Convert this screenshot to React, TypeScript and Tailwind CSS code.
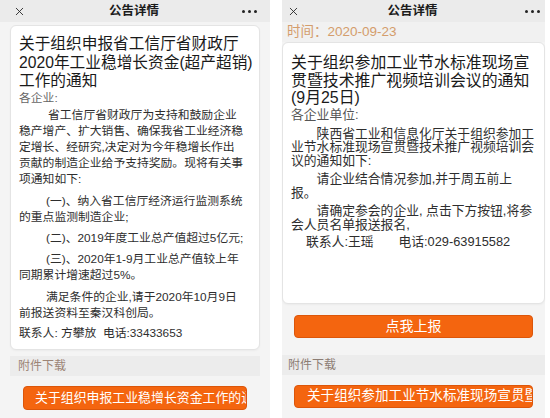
import { X } from 'lucide-react';

// Two notice pages shown side by side, each with its own top bar, body card and buttons.

function Dots() {
  return (
    <div className="flex items-center gap-[3px]">
      <span className="w-[3px] h-[3px] rounded-full bg-[#222]" />
      <span className="w-[3px] h-[3px] rounded-full bg-[#222]" />
      <span className="w-[3px] h-[3px] rounded-full bg-[#222]" />
    </div>
  );
}

function TopBar({ pad }: { pad: string }) {
  return (
    <div className={`h-[22px] shrink-0 bg-[#ebebeb] flex items-center justify-between ${pad}`}>
      <X className="w-[13px] h-[13px] text-[#222]" strokeWidth={1.6} />
      <span className="text-[12.5px] font-semibold text-[#1b1b1b]">公告详情</span>
      <Dots />
    </div>
  );
}

function LeftPage() {
  return (
    <div className="w-[270px] shrink-0 h-full bg-[#f4f4f4] flex flex-col">
      <TopBar pad="px-[13px]" />
      <div className="mx-[10px] mt-[3px] bg-white border border-[#e4e4e4] rounded-[6px] px-[8px] pt-[9px] pb-[8px] shadow-[0_1px_2px_rgba(0,0,0,0.04)]">
        <h1 className="text-[15.7px] leading-[18.5px] text-[#1a1a1a] whitespace-pre">
          {'关于组织申报省工信厅省财政厅\n2020年工业稳增长资金(超产超销)\n工作的通知'}
        </h1>
        <div className="text-[11.8px] leading-[16px] text-[#2e2e2e]">
          <p className="-mt-[1px] text-[#666]">各企业:</p>
          <p className="mt-[1px] indent-[29px] whitespace-pre">
            {'省工信厅省财政厅为支持和鼓励企业\n稳产增产、扩大销售、确保我省工业经济稳\n定增长、经研究,决定对为今年稳增长作出\n贡献的制造企业给予支持奖励。现将有关事\n项通知如下:'}
          </p>
          <p className="mt-[6px] indent-[27px] whitespace-pre">{'(一)、纳入省工信厅经济运行监测系统\n的重点监测制造企业;'}</p>
          <p className="mt-[5px] indent-[27px] whitespace-pre">(二)、2019年度工业总产值超过5亿元;</p>
          <p className="mt-[5px] indent-[27px] whitespace-pre">{'(三)、2020年1-9月工业总产值较上年\n同期累计增速超过5%。'}</p>
          <p className="mt-[6px] indent-[27px] whitespace-pre">{'满足条件的企业,请于2020年10月9日\n前报送资料至秦汉科创局。'}</p>
          <p className="mt-[4px] whitespace-pre">联系人: 方攀放  电话:33433653</p>
        </div>
      </div>
      <div className="mx-[10px] mt-[6px] h-[20px] shrink-0 bg-[#ececec] px-[8px] flex items-center text-[12px] text-[#9c8476]">附件下载</div>
      <div className="mx-[23px] mt-[10px] h-[24px] shrink-0 bg-[#f4650f] border border-[#dc560a] rounded-[4px] pl-[11px] flex items-center overflow-hidden whitespace-nowrap text-[12.9px] text-white">
        关于组织申报工业稳增长资金工作的通知
      </div>
    </div>
  );
}

function RightPage() {
  return (
    <div className="w-[263px] shrink-0 h-full bg-[#f4f4f4] flex flex-col">
      <TopBar pad="px-[5px]" />
      <div className="h-[20px] shrink-0 bg-[#f1f1f1] px-[5px] flex items-center text-[13.5px] text-[#d49d6c]">时间：2020-09-23</div>
      <div className="bg-white border border-[#e4e4e4] rounded-[6px] px-[8px] pt-[11px] pb-[54px] shadow-[0_1px_2px_rgba(0,0,0,0.04)]">
        <h1 className="text-[15.9px] leading-[17.5px] text-[#1a1a1a] whitespace-pre">
          {'关于组织参加工业节水标准现场宣\n贯暨技术推广视频培训会议的通知\n(9月25日)'}
        </h1>
        <div className="text-[12.8px] leading-[13.5px] text-[#2e2e2e]">
          <p className="mt-[1px] leading-[14px] text-[#555]">各企业单位:</p>
          <p className="mt-[5px] indent-[2em] whitespace-pre">
            {'陕西省工业和信息化厅关于组织参加工\n业节水标准现场宣贯暨技术推广视频培训会\n议的通知如下:'}
          </p>
          <p className="mt-[5px] indent-[2em] whitespace-pre">{'请企业结合情况参加,并于周五前上\n报。'}</p>
          <p className="mt-[5px] indent-[2em] whitespace-pre">{'请确定参会的企业, 点击下方按钮,将参\n会人员名单报送报名,'}</p>
          <p className="mt-[4px] pl-[15px] whitespace-pre">联系人:王瑶       电话:029-63915582</p>
        </div>
      </div>
      <div className="mx-[12px] mt-[11px] h-[23px] shrink-0 bg-[#f4650f] border border-[#dc560a] rounded-[4px] flex items-center justify-center text-[14px] text-white">
        点我上报
      </div>
      <div className="mt-[17px] h-[20px] shrink-0 bg-[#ececec] px-[6px] flex items-center text-[12px] text-[#8c7d74]">附件下载</div>
      <div className="mx-[12px] mt-[10px] h-[23px] shrink-0 bg-[#f4650f] border border-[#dc560a] rounded-[4px] pl-[12px] flex items-center overflow-hidden whitespace-nowrap text-[13.6px] text-white">
        关于组织参加工业节水标准现场宣贯暨技术推广视频培训会议的通知
      </div>
    </div>
  );
}

export default function App() {
  return (
    <div className="w-[550px] h-[418px] overflow-hidden bg-white flex gap-[12px] font-['Liberation_Sans','Noto_Sans_CJK_SC',sans-serif]">
      <LeftPage />
      <RightPage />
    </div>
  );
}
